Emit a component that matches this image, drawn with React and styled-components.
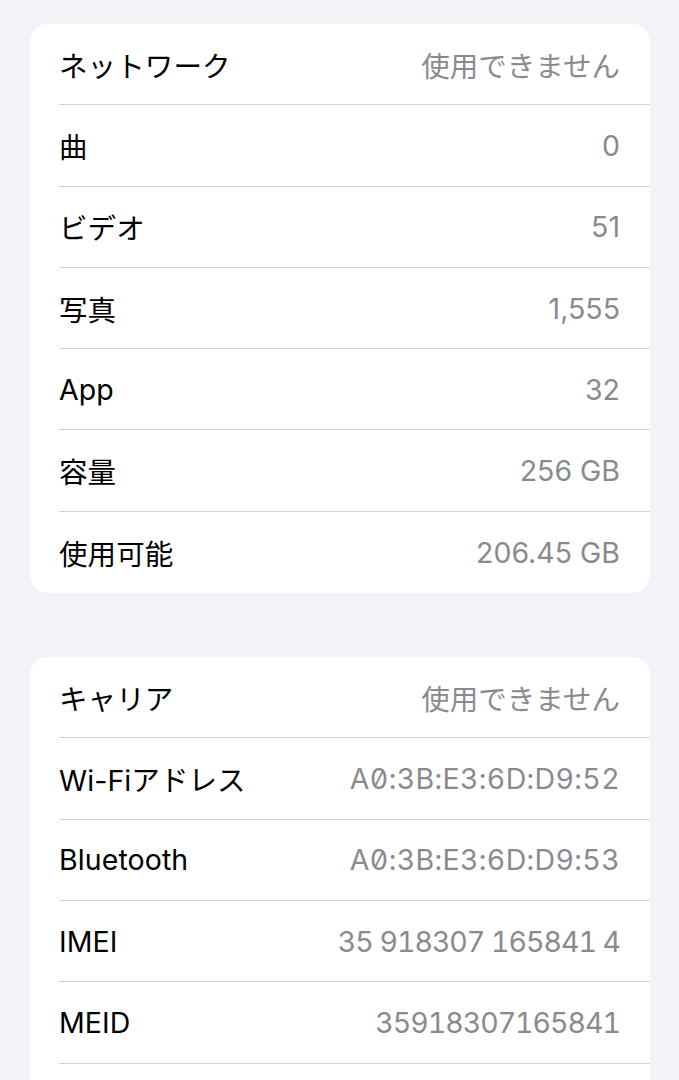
import styled, { createGlobalStyle } from "styled-components";

const GlobalStyle = createGlobalStyle`
  html, body {
    margin: 0;
    padding: 0;
    background-color: #f2f2f7;
  }
  body {
    font-family: Inter, "Noto Sans CJK JP", sans-serif;
    -webkit-font-smoothing: antialiased;
  }
`;

const Page = styled.div`
  width: 679px;
  height: 1080px;
  overflow: hidden;
  padding: 24px 29px 0 30px;
  box-sizing: border-box;
  display: flex;
  flex-direction: column;
  gap: 64px;
`;

const Card = styled.div`
  background-color: #ffffff;
  border-radius: 18px;
  display: flex;
  flex-direction: column;
  overflow: hidden;
  flex-shrink: 0;
`;

const Row = styled.div`
  height: 81.3px;
  margin-left: 29px;
  padding-right: 30px;
  display: flex;
  align-items: center;
  justify-content: space-between;
  box-sizing: border-box;
  border-bottom: ${(props) => (props.last ? "none" : "1px solid #d1d1d6")};
`;

const Label = styled.span`
  font-size: 28.5px;
  color: #000000;
  letter-spacing: 0.1px;
`;

// kind: "mac" = slashed zeros, "serial" = tabular digits set tight
const numberStyles = {
  mac: { spacing: "0.35px", features: '"tnum", "zero"' },
  serial: { spacing: "-1px", features: '"tnum"' },
};

const Value = styled.span`
  font-size: 28.5px;
  color: #8a8a8e;
  letter-spacing: ${(props) => numberStyles[props.kind]?.spacing || "0"};
  font-feature-settings: ${(props) => numberStyles[props.kind]?.features || "normal"};
`;

const storage = [
  { label: "ネットワーク", value: "使用できません" },
  { label: "曲", value: "0" },
  { label: "ビデオ", value: "51" },
  { label: "写真", value: "1,555" },
  { label: "App", value: "32" },
  { label: "容量", value: "256 GB" },
  { label: "使用可能", value: "206.45 GB" },
];

const hardware = [
  { label: "キャリア", value: "使用できません" },
  { label: "Wi-Fiアドレス", value: "A0:3B:E3:6D:D9:52", kind: "mac" },
  { label: "Bluetooth", value: "A0:3B:E3:6D:D9:53", kind: "mac" },
  { label: "IMEI", value: "35 918307 165841 4", kind: "serial" },
  { label: "MEID", value: "35918307165841", kind: "serial" },
];

// continued: the list runs on past the bottom of the screen
const InfoCard = ({ items, continued }) => (
  <Card>
    {items.map((item, i) => (
      <Row key={item.label} last={!continued && i === items.length - 1}>
        <Label>{item.label}</Label>
        <Value kind={item.kind}>{item.value}</Value>
      </Row>
    ))}
    {continued && <Row last />}
  </Card>
);

const App = () => {
  return (
    <>
      <GlobalStyle />
      <Page>
        <InfoCard items={storage} />
        <InfoCard items={hardware} continued />
      </Page>
    </>
  );
};

export default App;
